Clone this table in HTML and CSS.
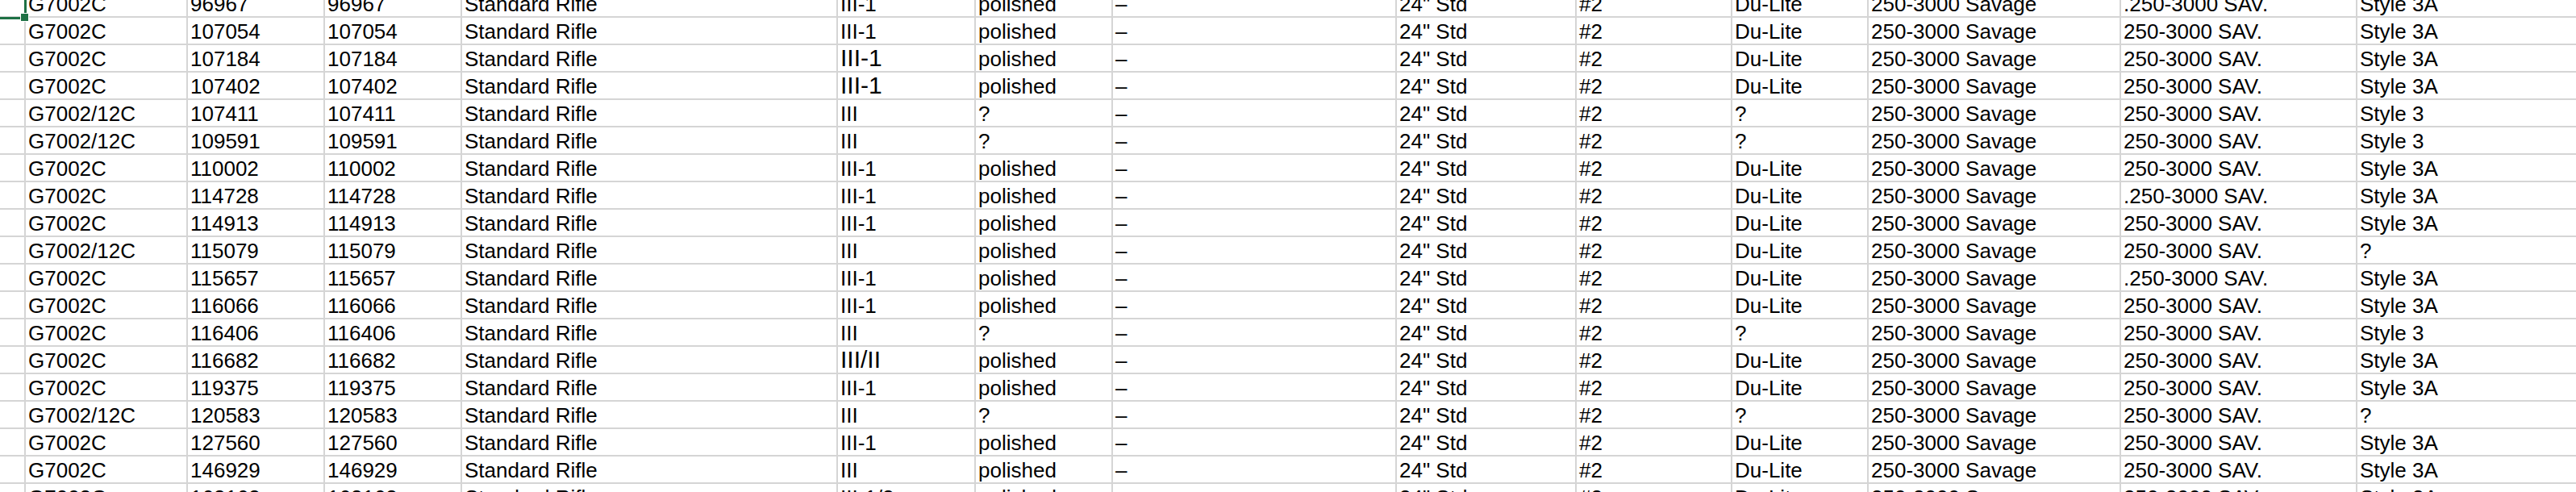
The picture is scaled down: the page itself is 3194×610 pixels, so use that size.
FILE: index.html
```html
<!DOCTYPE html>
<html lang="en">
<head>
<meta charset="utf-8">
<title>Sheet</title>
<link rel="stylesheet" href="styles.css">
</head>
<body>
<div class="sheet">
  <div class="grid">
    <div class="row"><div class="c sel-cell"><span class="sel"></span><span class="handle"></span></div><div class="c">G7002C</div><div class="c">96967</div><div class="c">96967</div><div class="c">Standard Rifle</div><div class="c">III-1</div><div class="c">polished</div><div class="c">–</div><div class="c">24" Std</div><div class="c">#2</div><div class="c">Du-Lite</div><div class="c">250-3000 Savage</div><div class="c">.250-3000 SAV.</div><div class="c">Style 3A</div></div>
    <div class="row"><div class="c"></div><div class="c">G7002C</div><div class="c">107054</div><div class="c">107054</div><div class="c">Standard Rifle</div><div class="c">III-1</div><div class="c">polished</div><div class="c">–</div><div class="c">24" Std</div><div class="c">#2</div><div class="c">Du-Lite</div><div class="c">250-3000 Savage</div><div class="c">250-3000 SAV.</div><div class="c">Style 3A</div></div>
    <div class="row"><div class="c"></div><div class="c">G7002C</div><div class="c">107184</div><div class="c">107184</div><div class="c">Standard Rifle</div><div class="c big">III-1</div><div class="c">polished</div><div class="c">–</div><div class="c">24" Std</div><div class="c">#2</div><div class="c">Du-Lite</div><div class="c">250-3000 Savage</div><div class="c">250-3000 SAV.</div><div class="c">Style 3A</div></div>
    <div class="row"><div class="c"></div><div class="c">G7002C</div><div class="c">107402</div><div class="c">107402</div><div class="c">Standard Rifle</div><div class="c big">III-1</div><div class="c">polished</div><div class="c">–</div><div class="c">24" Std</div><div class="c">#2</div><div class="c">Du-Lite</div><div class="c">250-3000 Savage</div><div class="c">250-3000 SAV.</div><div class="c">Style 3A</div></div>
    <div class="row"><div class="c"></div><div class="c">G7002/12C</div><div class="c">107411</div><div class="c">107411</div><div class="c">Standard Rifle</div><div class="c">III</div><div class="c">?</div><div class="c">–</div><div class="c">24" Std</div><div class="c">#2</div><div class="c">?</div><div class="c">250-3000 Savage</div><div class="c">250-3000 SAV.</div><div class="c">Style 3</div></div>
    <div class="row"><div class="c"></div><div class="c">G7002/12C</div><div class="c">109591</div><div class="c">109591</div><div class="c">Standard Rifle</div><div class="c">III</div><div class="c">?</div><div class="c">–</div><div class="c">24" Std</div><div class="c">#2</div><div class="c">?</div><div class="c">250-3000 Savage</div><div class="c">250-3000 SAV.</div><div class="c">Style 3</div></div>
    <div class="row"><div class="c"></div><div class="c">G7002C</div><div class="c">110002</div><div class="c">110002</div><div class="c">Standard Rifle</div><div class="c">III-1</div><div class="c">polished</div><div class="c">–</div><div class="c">24" Std</div><div class="c">#2</div><div class="c">Du-Lite</div><div class="c">250-3000 Savage</div><div class="c">250-3000 SAV.</div><div class="c">Style 3A</div></div>
    <div class="row"><div class="c"></div><div class="c">G7002C</div><div class="c">114728</div><div class="c">114728</div><div class="c">Standard Rifle</div><div class="c">III-1</div><div class="c">polished</div><div class="c">–</div><div class="c">24" Std</div><div class="c">#2</div><div class="c">Du-Lite</div><div class="c">250-3000 Savage</div><div class="c">.250-3000 SAV.</div><div class="c">Style 3A</div></div>
    <div class="row"><div class="c"></div><div class="c">G7002C</div><div class="c">114913</div><div class="c">114913</div><div class="c">Standard Rifle</div><div class="c">III-1</div><div class="c">polished</div><div class="c">–</div><div class="c">24" Std</div><div class="c">#2</div><div class="c">Du-Lite</div><div class="c">250-3000 Savage</div><div class="c">250-3000 SAV.</div><div class="c">Style 3A</div></div>
    <div class="row"><div class="c"></div><div class="c">G7002/12C</div><div class="c">115079</div><div class="c">115079</div><div class="c">Standard Rifle</div><div class="c">III</div><div class="c">polished</div><div class="c">–</div><div class="c">24" Std</div><div class="c">#2</div><div class="c">Du-Lite</div><div class="c">250-3000 Savage</div><div class="c">250-3000 SAV.</div><div class="c">?</div></div>
    <div class="row"><div class="c"></div><div class="c">G7002C</div><div class="c">115657</div><div class="c">115657</div><div class="c">Standard Rifle</div><div class="c">III-1</div><div class="c">polished</div><div class="c">–</div><div class="c">24" Std</div><div class="c">#2</div><div class="c">Du-Lite</div><div class="c">250-3000 Savage</div><div class="c">.250-3000 SAV.</div><div class="c">Style 3A</div></div>
    <div class="row"><div class="c"></div><div class="c">G7002C</div><div class="c">116066</div><div class="c">116066</div><div class="c">Standard Rifle</div><div class="c">III-1</div><div class="c">polished</div><div class="c">–</div><div class="c">24" Std</div><div class="c">#2</div><div class="c">Du-Lite</div><div class="c">250-3000 Savage</div><div class="c">250-3000 SAV.</div><div class="c">Style 3A</div></div>
    <div class="row"><div class="c"></div><div class="c">G7002C</div><div class="c">116406</div><div class="c">116406</div><div class="c">Standard Rifle</div><div class="c">III</div><div class="c">?</div><div class="c">–</div><div class="c">24" Std</div><div class="c">#2</div><div class="c">?</div><div class="c">250-3000 Savage</div><div class="c">250-3000 SAV.</div><div class="c">Style 3</div></div>
    <div class="row"><div class="c"></div><div class="c">G7002C</div><div class="c">116682</div><div class="c">116682</div><div class="c">Standard Rifle</div><div class="c big">III/II</div><div class="c">polished</div><div class="c">–</div><div class="c">24" Std</div><div class="c">#2</div><div class="c">Du-Lite</div><div class="c">250-3000 Savage</div><div class="c">250-3000 SAV.</div><div class="c">Style 3A</div></div>
    <div class="row"><div class="c"></div><div class="c">G7002C</div><div class="c">119375</div><div class="c">119375</div><div class="c">Standard Rifle</div><div class="c">III-1</div><div class="c">polished</div><div class="c">–</div><div class="c">24" Std</div><div class="c">#2</div><div class="c">Du-Lite</div><div class="c">250-3000 Savage</div><div class="c">250-3000 SAV.</div><div class="c">Style 3A</div></div>
    <div class="row"><div class="c"></div><div class="c">G7002/12C</div><div class="c">120583</div><div class="c">120583</div><div class="c">Standard Rifle</div><div class="c">III</div><div class="c">?</div><div class="c">–</div><div class="c">24" Std</div><div class="c">#2</div><div class="c">?</div><div class="c">250-3000 Savage</div><div class="c">250-3000 SAV.</div><div class="c">?</div></div>
    <div class="row"><div class="c"></div><div class="c">G7002C</div><div class="c">127560</div><div class="c">127560</div><div class="c">Standard Rifle</div><div class="c">III-1</div><div class="c">polished</div><div class="c">–</div><div class="c">24" Std</div><div class="c">#2</div><div class="c">Du-Lite</div><div class="c">250-3000 Savage</div><div class="c">250-3000 SAV.</div><div class="c">Style 3A</div></div>
    <div class="row"><div class="c"></div><div class="c">G7002C</div><div class="c">146929</div><div class="c">146929</div><div class="c">Standard Rifle</div><div class="c">III</div><div class="c">polished</div><div class="c">–</div><div class="c">24" Std</div><div class="c">#2</div><div class="c">Du-Lite</div><div class="c">250-3000 Savage</div><div class="c">250-3000 SAV.</div><div class="c">Style 3A</div></div>
    <div class="row"><div class="c"></div><div class="c">G7002C</div><div class="c">163163</div><div class="c">163163</div><div class="c">Standard Rifle</div><div class="c">III-1/2</div><div class="c">polished</div><div class="c">–</div><div class="c">24" Std</div><div class="c">#2</div><div class="c">Du-Lite</div><div class="c">250-3000 Savage</div><div class="c">250-3000 SAV.</div><div class="c">Style 3A</div></div>
  </div>
</div>
</body>
</html>
```
FILE: styles.css
```css
html, body {
  margin: 0;
  padding: 0;
  background: #ffffff;
}

body {
  width: 3194px;
  height: 610px;
  overflow: hidden;
  font-family: "Liberation Sans", Arial, sans-serif;
  font-size: 26px;
  color: #000000;
}

.sheet {
  width: 3194px;
  height: 610px;
  overflow: hidden;
}

.grid {
  margin-top: -12px;
  display: grid;
  grid-template-columns: 30px 199px 168px 168px 464px 169px 168px 350px 221px 191px 167px 311px 291px 1fr;
  grid-auto-rows: 32px;
  gap: 2px;
  background: #d5d5d5;
}

.row {
  display: contents;
}

.c {
  background: #ffffff;
  box-sizing: border-box;
  height: 32px;
  padding: 1px 0 0 3px;
  line-height: 32px;
  white-space: nowrap;
  overflow: hidden;
}

.c.big {
  font-size: 30px;
  padding-top: 0;
}

.sel-cell {
  position: relative;
  overflow: visible;
  z-index: 2;
}

.sel {
  position: absolute;
  left: -10px;
  top: -10px;
  width: 43px;
  height: 46px;
  box-sizing: border-box;
  border: 3px solid #1e7145;
}

.handle {
  position: absolute;
  left: 26px;
  top: 29px;
  width: 9px;
  height: 9px;
  background: #1e7145;
  box-shadow: 0 0 0 1px #ffffff;
}
```
